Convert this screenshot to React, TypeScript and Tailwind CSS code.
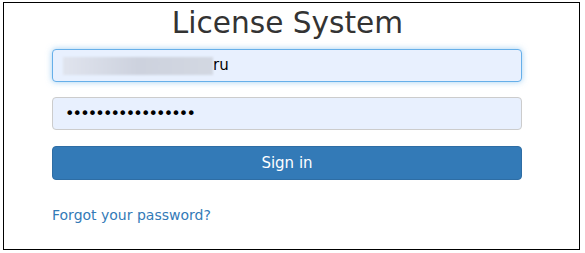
export default function App() {
  return (
    <div className="bg-white w-[585px] h-[253px] pt-[2px] pl-[3px]" style={{ fontFamily: '"DejaVu Sans", Verdana, sans-serif' }}>
      <div className="w-[577px] h-[248px] border border-black">
        <h1 className="text-center text-[29.6px] leading-[36px] text-[#333] mt-[2px] pr-[8px]">License System</h1>
        <form className="ml-[48px] w-[470px] mt-[8px] flex flex-col">
          <div className="h-[33px] rounded-[4px] border border-[#66afe9] bg-[#e8f0fe] shadow-[0_0_6px_rgba(102,175,233,0.6)] flex items-center pl-[10px]">
            <span className="w-[150px] h-[18px] bg-gradient-to-r from-[#e0e4ee] via-[#cdd2de] to-[#d3d8e2] blur-[1px]" />
            <span className="text-[15px] text-black leading-none">ru</span>
          </div>
          <div className="h-[33px] mt-[15px] rounded-[4px] border border-[#ccc] bg-[#e8f0fe] flex items-center pl-[12px]">
            <span className="text-[16px] tracking-[-1.85px] text-black leading-none">•••••••••••••••••</span>
          </div>
          <button type="button" className="h-[34px] mt-[16px] rounded-[4px] bg-[#337ab7] border border-[#2e6da4] text-white text-[15px]">
            Sign in
          </button>
          <a href="#" className="mt-[26px] text-[#337ab7] text-[14px] leading-[18px]">Forgot your password?</a>
        </form>
      </div>
    </div>
  );
}
